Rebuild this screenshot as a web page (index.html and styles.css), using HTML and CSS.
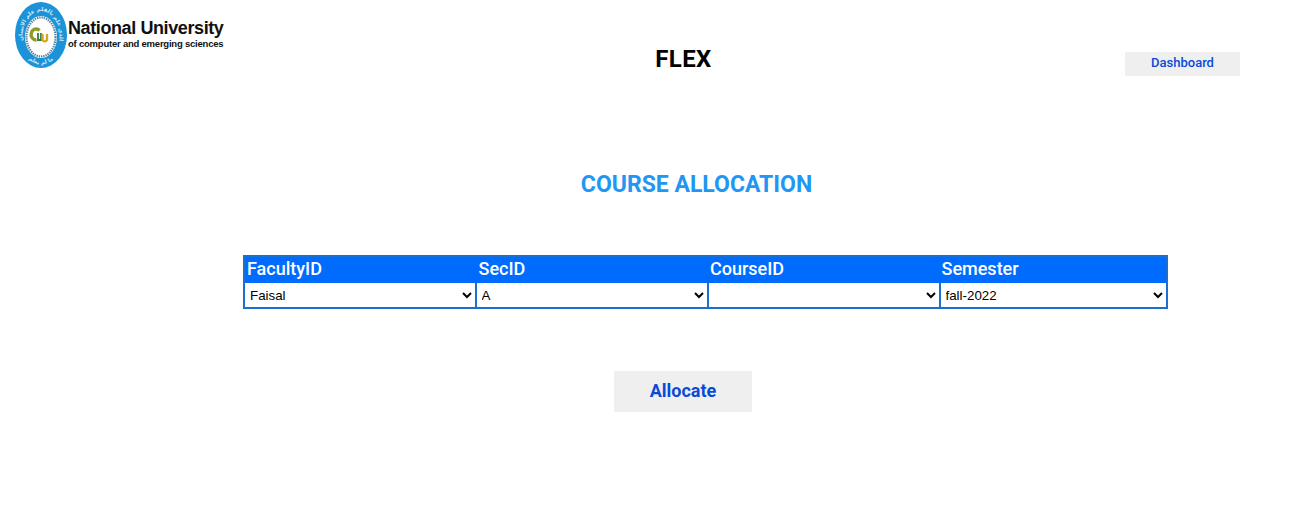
FILE: index.html
```html
<!DOCTYPE html>
<html lang="en">
<head>
<meta charset="utf-8">
<title>Course Allocation</title>
<link rel="stylesheet" href="styles.css">
</head>
<body>
<header class="top">
  <div class="brand-col">
    <div class="logo">
      <svg class="crest" viewBox="0 0 52 66" width="52" height="66" aria-hidden="true">
        <defs>
          <path id="arc-top" d="M9.400 45 A18.500 25 0 1 1 42.600 45"/>
          <path id="arc-bottom" d="M7 48 A22 29 0 0 0 45 48"/>
        </defs>
        <ellipse cx="26" cy="33" rx="26" ry="33" fill="#1c93d8"/>
        <ellipse cx="26" cy="35" rx="16" ry="21" fill="#fff"/>
        <ellipse cx="26" cy="35" rx="14.500" ry="19.500" fill="none" stroke="#5b7f9c" stroke-width="2.200" stroke-dasharray="1.400 0.900"/>
        <ellipse cx="26" cy="35" rx="12" ry="16" fill="#fff"/>
        <text class="crest-script"><textPath href="#arc-top" startOffset="50%" text-anchor="middle">الذي علم بالقلم علم الانسان</textPath></text>
        <text class="crest-script"><textPath href="#arc-bottom" startOffset="50%" text-anchor="middle">ما لم يعلم</textPath></text>
        <path d="M24.500 28.500a5 5.500 0 1 0-3 9.500" fill="none" stroke="#8f9a24" stroke-width="3.400"/>
        <path d="M23 31v7h3v-7" fill="none" stroke="#2f7d3a" stroke-width="1.800"/>
        <path d="M27.500 32v6a2.500 2.500 0 0 0 4.500 0v-6" fill="none" stroke="#d9a520" stroke-width="2.400"/>
      </svg>
      <div class="wordmark">
        <div class="uni">National University</div>
        <div class="tag">of computer and emerging sciences</div>
      </div>
    </div>
  </div>
  <h1 class="flex-title">FLEX</h1>
  <a class="dash" href="#">Dashboard</a>
</header>
<main class="content">
  <h2 class="heading">COURSE ALLOCATION</h2>
  <table class="alloc">
    <colgroup>
      <col class="col-wide"><col class="col-wide"><col class="col-mid"><col class="col-last">
    </colgroup>
    <thead>
      <tr><th>FacultyID</th><th>SecID</th><th class="th-tight">CourseID</th><th class="th-tight">Semester</th></tr>
    </thead>
    <tbody>
      <tr>
        <td><select><option>Faisal</option></select></td>
        <td><select><option>A</option></select></td>
        <td><select><option></option></select></td>
        <td><select><option>fall-2022</option></select></td>
      </tr>
    </tbody>
  </table>
  <button class="allocate" type="button">Allocate</button>
</main>
</body>
</html>
```
FILE: styles.css
```css
* { box-sizing: border-box; }
html, body { margin: 0; padding: 0; background: #fff; }
body { width: 1308px; height: 528px; overflow: hidden; font-family: Roboto, "Liberation Sans", sans-serif; }
.top { display: flex; align-items: flex-start; height: 120px; }
.brand-col { width: 625px; padding: 2px 0 0 15px; }
.logo { display: flex; align-items: flex-start; }
.crest { display: block; flex: none; }
.crest-script { font-family: "DejaVu Sans", sans-serif; font-size: 5.500px; font-weight: 700; fill: #cfeaf8; }
.wordmark { margin-left: 1px; padding-top: 16px; white-space: nowrap; font-family: "Liberation Sans", sans-serif; font-weight: 700; color: #111; }
.uni { font-size: 18px; line-height: 20px; letter-spacing: -0.4px; }
.tag { font-size: 9.500px; line-height: 11px; letter-spacing: -0.22px; }
.flex-title { width: 116px; margin: 46px 0 0; padding-left: 1px; text-align: center; font-size: 24px; line-height: 27px; font-weight: 700; letter-spacing: 0.4px; color: #000; }
.dash { display: block; width: 115px; height: 24px; margin: 52px 0 0 384px; background: #efefef; color: #0a4ad8; text-align: center; font-size: 13px; line-height: 21px; font-weight: 500; text-decoration: none; }
.content { display: flex; flex-direction: column; align-items: flex-start; }
.heading { width: 100%; margin: 51px 0 0; padding-left: 85px; text-align: center; font-size: 23px; line-height: 28px; font-weight: 700; color: #2196f3; }
.alloc { width: 925px; height: 54px; margin: 56px 0 0 243px; border-collapse: collapse; table-layout: fixed; background: #1a6fcf; border: 2px solid #1a6fcf; }
.col-wide { width: 232px; }
.col-mid { width: 231px; }
.col-last { width: 226px; }
.alloc th { padding: 0 2px 3px; height: 26px; background: #006cff; color: #fff; text-align: left; font-size: 18px; line-height: 23px; font-weight: 500; }
.alloc .th-tight { padding-left: 1px; }
.alloc td { padding: 0 2px 0 0; height: 24px; }
.alloc td:last-child { padding-right: 0; }
.alloc select { display: block; width: 100%; height: 24px; padding: 0 0 0 1px; border: 0; border-radius: 0; background-color: #fff; color: #000; font-family: "Liberation Sans", sans-serif; font-size: 13.333px; }
.allocate { display: block; width: 138px; height: 41px; margin: 62px 0 0 614px; padding: 0 0 2px; border: 0; background: #efefef; color: #0a4ad8; font-family: Roboto, sans-serif; font-size: 18px; font-weight: 700; }
```
